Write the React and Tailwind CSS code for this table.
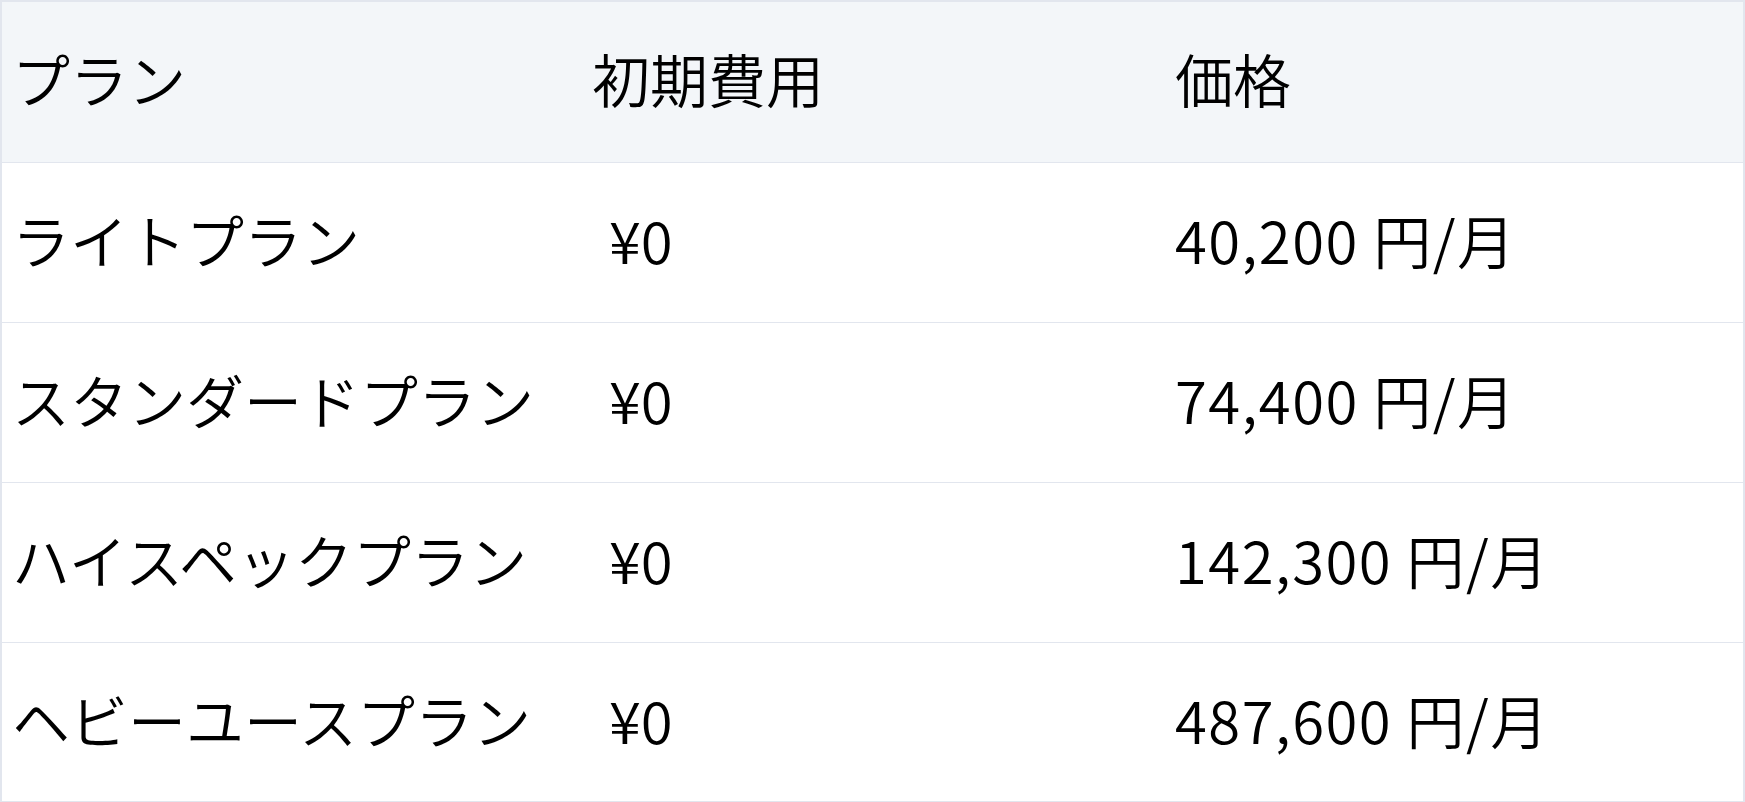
export default function App() {
  const rows = [
    ["ライトプラン", "¥0", "40,200 円/月"],
    ["スタンダードプラン", "¥0", "74,400 円/月"],
    ["ハイスペックプラン", "¥0", "142,300 円/月"],
    ["ヘビーユースプラン", "¥0", "487,600 円/月"],
  ];
  const font = { fontFamily: '"Noto Sans CJK JP", "Noto Sans", sans-serif' };
  return (
    <div className="w-[1745px] h-[802px] bg-white" style={font}>
      <table className="w-full border-collapse border-2 border-[#e2e6ee] text-[58px] leading-none text-black font-[350]">
        <thead>
          <tr className="bg-[#f3f6f9] h-[161px] border-b border-[#e2e6ee]">
            <th className="w-1/3 text-left font-[350] pl-[10px] pb-[8px]">プラン</th>
            <th className="w-1/3 text-left font-[350] pl-[10px] pb-[8px]">初期費用</th>
            <th className="w-1/3 text-left font-[350] pl-[12px] pb-[8px]">価格</th>
          </tr>
        </thead>
        <tbody>
          {rows.map((r, i) => (
            <tr key={i} className="h-[160px] border-b border-[#e2e6ee]">
              <td className="pl-[10px] pb-[6px] whitespace-nowrap">{r[0]}</td>
              <td className="pl-[27px] pb-[6px]">{r[1]}</td>
              <td className="pl-[12px] pb-[6px] tracking-[1.5px] whitespace-nowrap">{r[2]}</td>
            </tr>
          ))}
        </tbody>
      </table>
    </div>
  );
}
